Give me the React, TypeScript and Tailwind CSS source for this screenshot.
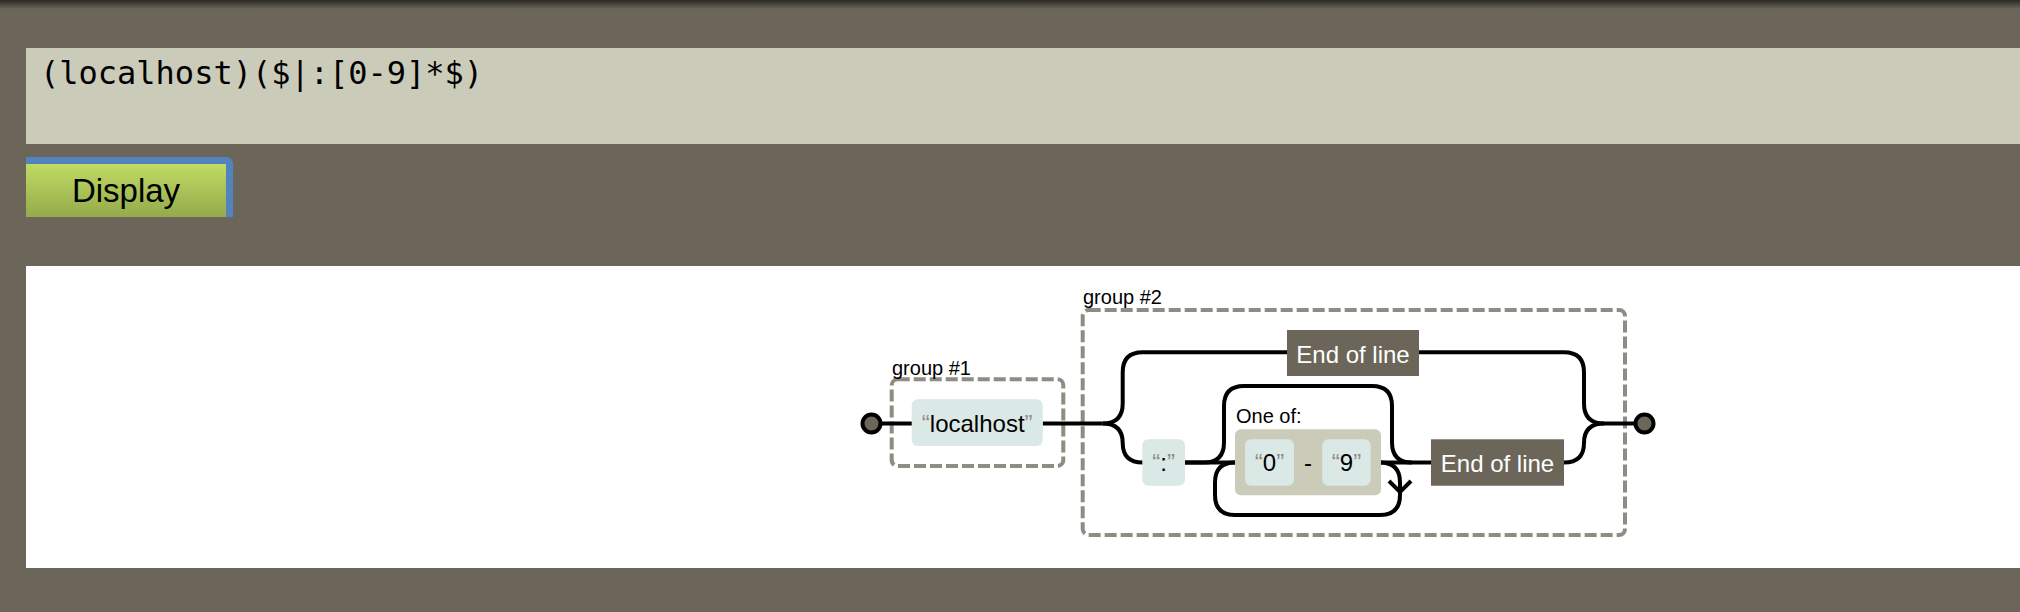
const sans = "'Liberation Sans', Arial, sans-serif";

function Quoted({ x, y, text }: { x: number; y: number; text: string }) {
  return (
    <text x={x} y={y} textAnchor="middle" fontSize={24} fontFamily={sans} fill="#000">
      <tspan fill="#908c83">“</tspan>
      {text}
      <tspan fill="#908c83">”</tspan>
    </text>
  );
}

function Diagram() {
  return (
    <svg width={830} height={302} viewBox="840 266 830 302" className="ml-[814px] block">
      {/* group boxes */}
      <g fill="none" stroke="#908c83" strokeWidth={4} strokeDasharray="12,4">
        <rect x={891.7} y={379.3} width={171.6} height={86.7} rx={6} />
        <rect x={1082.7} y={310} width={542.3} height={225} rx={6} />
      </g>
      <g fontFamily={sans} fontSize={20} fill="#000">
        <text x={892} y={375}>group #1</text>
        <text x={1083} y={304}>group #2</text>
        <text x={1236} y={423}>One of:</text>
      </g>

      {/* connecting paths */}
      <g fill="none" stroke="#000" strokeWidth={4}>
        <path d="M871.5,423.5 H912" />
        <path d="M1042.7,423.5 H1102.7" />
        <path d="M1102.7,423.5 q20,0 20,-20 V372.3 q0,-20 20,-20 H1287" />
        <path d="M1419,352.3 H1564 q20,0 20,20 V403.5 q0,20 20,20" />
        <path d="M1102.7,423.5 q20,0 20,19.5 q0,19.5 20,19.5 H1143" />
        <path d="M1185,462.5 H1235" />
        <path d="M1185,462.5 H1204 q20,0 20,-20 V406 q0,-20 20,-20 H1372 q20,0 20,20 V442.5 q0,20 20,20" />
        <path d="M1380,462.5 H1431" />
        <path d="M1380,462.5 q20,0 20,20 V495 q0,20 -20,20 H1235 q-20,0 -20,-20 V482.5 q0,-20 20,-20" />
        <path d="M1389,481 L1400,492 L1411,481" />
        <path d="M1564,462.5 q20,0 20,-19.5 q0,-19.5 20,-19.5" />
        <path d="M1604,423.5 H1644" />
      </g>

      {/* literals */}
      <g fill="#dae9e5">
        <rect x={911.7} y={399.3} width={131} height={46.7} rx={6} />
        <rect x={1142.3} y={439.3} width={42.7} height={46.4} rx={6} />
      </g>
      <rect x={1235} y={429.3} width={146} height={66} rx={6} fill="#cbcbba" />
      <g fill="#dae9e5">
        <rect x={1245} y={439.3} width={49} height={46.4} rx={6} />
        <rect x={1322.3} y={439.3} width={48.4} height={46.4} rx={6} />
      </g>
      <Quoted x={977.2} y={432} text="localhost" />
      <Quoted x={1163.7} y={471} text=":" />
      <Quoted x={1269.5} y={471} text="0" />
      <Quoted x={1346.5} y={471} text="9" />
      <text x={1308} y={471} textAnchor="middle" fontSize={24} fontFamily={sans}>-</text>

      {/* anchors */}
      <rect x={1287} y={330} width={132} height={46} fill="#6b6659" />
      <rect x={1431} y={439.3} width={133} height={46.4} fill="#6b6659" />
      <g fontFamily={sans} fontSize={24} fill="#fff" textAnchor="middle">
        <text x={1353} y={362.5}>End of line</text>
        <text x={1497.5} y={471.5}>End of line</text>
      </g>

      {/* start / end */}
      <g fill="#6b6659" stroke="#000" strokeWidth={4}>
        <circle cx={871.5} cy={423.5} r={9} />
        <circle cx={1644.5} cy={423.5} r={9} />
      </g>
    </svg>
  );
}

export default function App() {
  return (
    <div className="min-h-screen overflow-hidden bg-[#6b6659] font-['Liberation_Sans',Arial,sans-serif]">
      <div className="h-[9px] bg-linear-to-b from-[#2c2a25] to-[#6b6659]" />
      <div className="pl-[26px] pt-[39px]">
        <div className="h-[96px] bg-[#cbcbba] pl-[14px] pt-[7px] font-['DejaVu_Sans_Mono',monospace] text-[32px] leading-[37px] text-black">
          (localhost)($|:[0-9]*$)
        </div>
        <div className="mt-[13px] flex">
          <div className="rounded-tr-[7px] border-t-[7px] border-r-[7px] border-[#5283bd]">
            <button className="block h-[53px] w-[200px] bg-linear-to-b from-[#c0db63] to-[#95aa4b] text-[33px] text-black">
              Display
            </button>
          </div>
        </div>
        <div className="mt-[49px] h-[302px] bg-white">
          <Diagram />
        </div>
      </div>
    </div>
  );
}
